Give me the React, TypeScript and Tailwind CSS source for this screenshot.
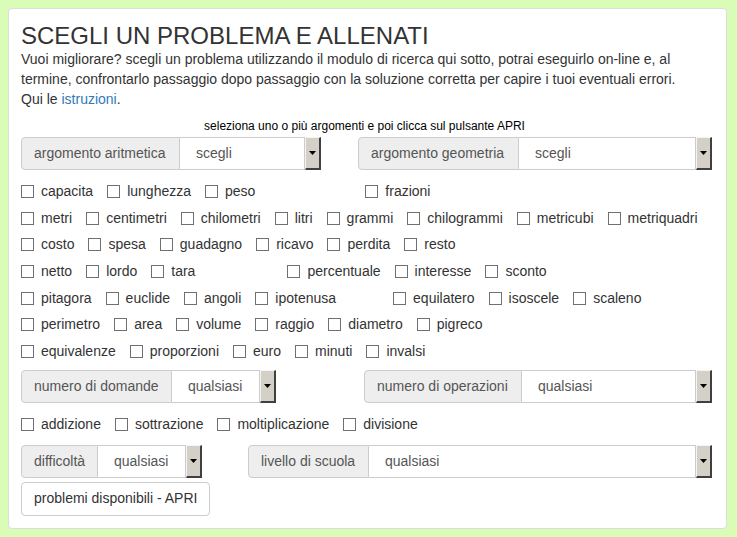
import React from "react";

type Item = { label: string; gap?: string };

const rows: Item[][] = [
  [{ label: "capacita" }, { label: "lunghezza" }, { label: "peso" }, { label: "frazioni", gap: "ml-[96px]" }],
  [
    { label: "metri" },
    { label: "centimetri" },
    { label: "chilometri" },
    { label: "litri" },
    { label: "grammi" },
    { label: "chilogrammi" },
    { label: "metricubi" },
    { label: "metriquadri" },
  ],
  [
    { label: "costo" },
    { label: "spesa" },
    { label: "guadagno" },
    { label: "ricavo" },
    { label: "perdita" },
    { label: "resto" },
  ],
  [
    { label: "netto" },
    { label: "lordo" },
    { label: "tara" },
    { label: "percentuale", gap: "ml-[78px]" },
    { label: "interesse" },
    { label: "sconto" },
  ],
  [
    { label: "pitagora" },
    { label: "euclide" },
    { label: "angoli" },
    { label: "ipotenusa" },
    { label: "equilatero", gap: "ml-[43px]" },
    { label: "isoscele" },
    { label: "scaleno" },
  ],
  [
    { label: "perimetro" },
    { label: "area" },
    { label: "volume" },
    { label: "raggio" },
    { label: "diametro" },
    { label: "pigreco" },
  ],
  [
    { label: "equivalenze" },
    { label: "proporzioni" },
    { label: "euro" },
    { label: "minuti" },
    { label: "invalsi" },
  ],
];

function Check({ label, gap }: Item) {
  return (
    <label className={`flex items-center mr-[14px] ${gap ?? ""}`}>
      <span className="w-[13px] h-[13px] border border-[#707070] bg-white mr-[7px] shrink-0" />
      <span>{label}</span>
    </label>
  );
}

function Arrow() {
  return (
    <span className="w-[16px] self-stretch bg-[#d4d0c8] border-t border-l border-t-[#f4f4f4] border-l-[#f4f4f4] border-r-2 border-b-2 border-r-[#404040] border-b-[#404040] flex items-center justify-center shrink-0">
      <svg width="7" height="4" viewBox="0 0 7 4">
        <path d="M0 0H7L3.5 4Z" fill="#000" />
      </svg>
    </span>
  );
}

function Group({
  addon,
  value,
  addonW,
  selW,
  className = "",
}: {
  addon: string;
  value: string;
  addonW: string;
  selW: string;
  className?: string;
}) {
  return (
    <div className={`flex h-[33px] text-[#555] ${className}`}>
      <div
        className={`${addonW} bg-[#eeeeee] border border-[#cccccc] rounded-l-[4px] flex items-center pl-[12px] shrink-0`}
      >
        {addon}
      </div>
      <div className={`${selW} border border-l-0 border-[#cccccc] bg-white flex items-center pl-[16px] shrink-0`}>
        <span className="flex-1">{value}</span>
      </div>
      <Arrow />
    </div>
  );
}

export default function App() {
  return (
    <div className="min-h-screen bg-[#d9fcb7] p-[8px] font-['Liberation_Sans',Arial,sans-serif] text-[14px] text-[#333]">
      <div className="w-[719px] h-[521px] bg-white border border-[#dddddd] rounded-[4px] px-[12px] pt-[13px]">
        <h1 className="text-[24px] leading-[27px] text-[#333]">SCEGLI UN PROBLEMA E ALLENATI</h1>
        <p className="leading-[20px] mt-[0px]">
          Vuoi migliorare? scegli un problema utilizzando il modulo di ricerca qui sotto, potrai eseguirlo on-line e, al
          termine, confrontarlo passaggio dopo passaggio con la soluzione corretta per capire i tuoi eventuali errori.
          <br />
          Qui le <span className="text-[#337ab7]">istruzioni</span>.
        </p>
        <div className="text-center text-[12px] leading-[14px] text-black mt-[10px] pr-[6px]">
          seleziona uno o più argomenti e poi clicca sul pulsante APRI
        </div>
        <div className="flex mt-[4px]">
          <Group addon="argomento aritmetica" value="scegli" addonW="w-[159px]" selW="w-[125px]" />
          <Group
            addon="argomento geometria"
            value="scegli"
            addonW="w-[161px]"
            selW="w-[177px]"
            className="ml-[37px]"
          />
        </div>
        <div className="mt-[8px]">
          {rows.map((r, i) => (
            <div key={i} className="flex items-center h-[26.7px]">
              {r.map((it) => (
                <Check key={it.label} {...it} />
              ))}
            </div>
          ))}
        </div>
        <div className="flex mt-[5px]">
          <Group addon="numero di domande" value="qualsiasi" addonW="w-[151px]" selW="w-[88px]" />
          <Group
            addon="numero di operazioni"
            value="qualsiasi"
            addonW="w-[158px]"
            selW="w-[174px]"
            className="ml-[88px]"
          />
        </div>
        <div className="flex items-center h-[26.7px] mt-[8px]">
          <Check label="addizione" />
          <Check label="sottrazione" />
          <Check label="moltiplicazione" />
          <Check label="divisione" />
        </div>
        <div className="flex mt-[7px]">
          <Group addon="difficoltà" value="qualsiasi" addonW="w-[77px]" selW="w-[88px]" />
          <Group
            addon="livello di scuola"
            value="qualsiasi"
            addonW="w-[121px]"
            selW="w-[327px]"
            className="ml-[46px]"
          />
        </div>
        <button className="mt-[4px] h-[34px] px-[12px] border border-[#cccccc] rounded-[4px] bg-white text-[#333]">
          problemi disponibili - APRI
        </button>
      </div>
    </div>
  );
}
